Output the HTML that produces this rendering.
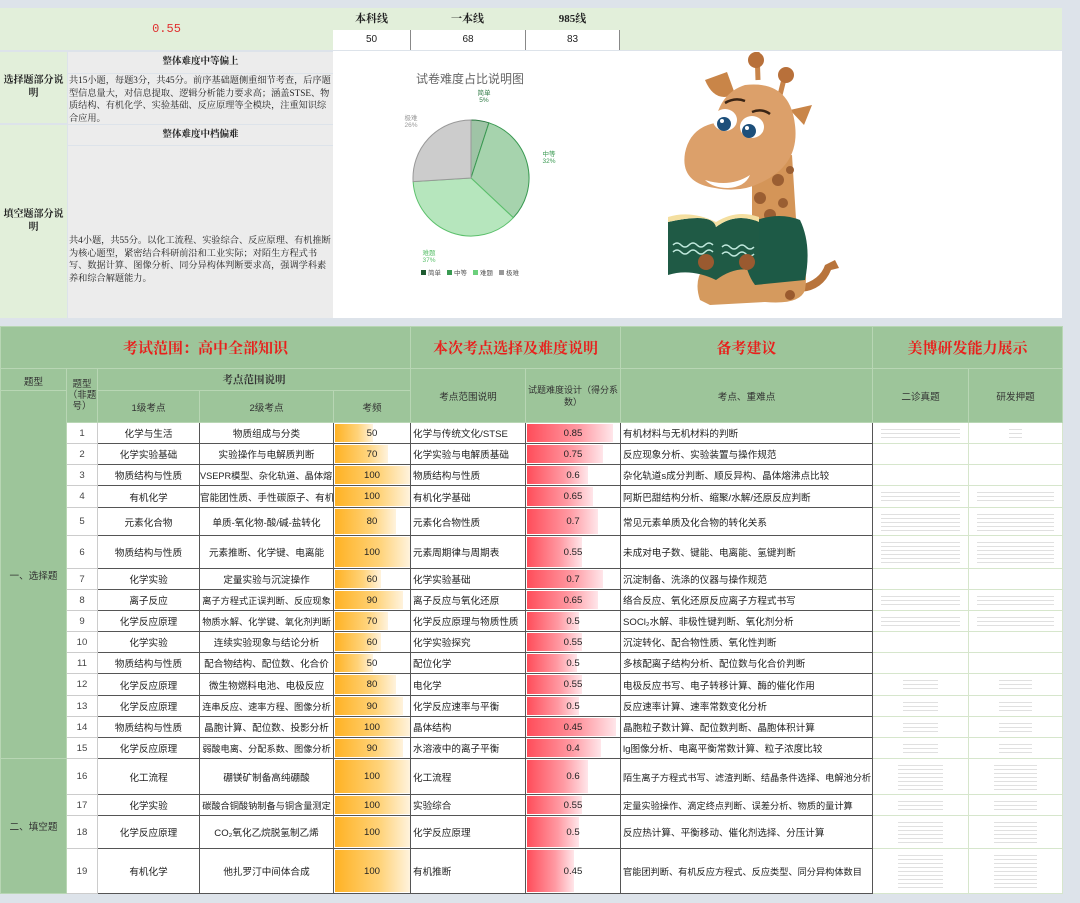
<!DOCTYPE html>
<html><head><meta charset="utf-8">
<style>
*{margin:0;padding:0;box-sizing:border-box}
body{width:1080px;height:903px;background:#dde3ea;position:relative;overflow:hidden;font-family:"Liberation Sans","Noto Sans CJK SC",sans-serif;color:#222}
.a{position:absolute}
.lg{background:#e2efda}
.ser{font-family:"Liberation Serif","Noto Serif CJK SC",serif}
table{position:absolute;left:0;top:326px;border-collapse:collapse;table-layout:fixed;width:1062px;font-size:9.6px}
td{overflow:hidden;white-space:nowrap;text-align:center;vertical-align:middle;position:relative;padding:0}
.h td,.hg{background:#9dc59a;border:1px solid #b8d6b4;color:#333}
.h1 td{font-family:"Liberation Serif","Noto Serif CJK SC",serif;font-weight:bold;color:#e8201c;font-size:15px}
.d td{background:#fff;border:1px solid #555}
.d td.n{border:1px solid #ccc;color:#444}
.d td.im{border:1px solid #d6e6cc}
.d td.l{text-align:left;padding-left:2px}
.g{background:#9dc59a!important;border:1px solid #b8d6b4!important;color:#333}
.b{position:absolute;left:1px;top:1px;bottom:1px}
.o{background:linear-gradient(90deg,#ffb224,#ffd37a 60%,#fff3dd)}
.r{background:linear-gradient(90deg,#ff4d5a,#ff9aa3 60%,#ffe6ea)}
td span{position:relative}
.th{position:absolute;left:8px;right:8px;top:3px;bottom:3px;background:repeating-linear-gradient(180deg,#fff 0 3px,#d8d8d8 3px 4px);opacity:.8}
</style></head><body>
<div class="a lg" style="left:0;top:8px;width:1062px;height:42px"></div>
<div class="a" style="left:0;top:8px;width:333px;height:42px;line-height:42px;text-align:center;color:#e03030;font-family:'Liberation Mono',monospace;font-size:12px">0.55</div>
<div class="a" style="left:333px;top:30px;width:287px;height:20px;background:#fff"></div>
<div class="a ser" style="left:333px;top:8px;width:77px;height:22px;line-height:22px;text-align:center;font-weight:bold;font-size:11px">本科线</div>
<div class="a ser" style="left:410px;top:8px;width:115px;height:22px;line-height:22px;text-align:center;font-weight:bold;font-size:11px">一本线</div>
<div class="a ser" style="left:525px;top:8px;width:95px;height:22px;line-height:22px;text-align:center;font-weight:bold;font-size:11px">985线</div>
<div class="a" style="left:333px;top:30px;width:77px;height:20px;line-height:20px;text-align:center;font-size:10px">50</div>
<div class="a" style="left:410px;top:30px;width:115px;height:20px;line-height:20px;text-align:center;font-size:10px;border-left:1px solid #888">68</div>
<div class="a" style="left:525px;top:30px;width:95px;height:20px;line-height:20px;text-align:center;font-size:10px;border-left:1px solid #888;border-right:1px solid #888">83</div>
<div class="a" style="left:333px;top:51px;width:729px;height:267px;background:#fff"></div>
<div class="a lg" style="left:0;top:52px;width:67px;height:71px"></div>
<div class="a lg" style="left:0;top:125px;width:67px;height:193px"></div>
<div class="a ser" style="left:0;top:74px;width:67px;text-align:center;font-weight:bold;font-size:10px;line-height:13px">选择题部分说<br>明</div>
<div class="a ser" style="left:0;top:208px;width:67px;text-align:center;font-weight:bold;font-size:10px;line-height:13px">填空题部分说<br>明</div>
<div class="a ser" style="left:68px;top:52px;width:265px;height:21px;background:#ececec;text-align:center;line-height:21px;font-weight:bold;font-size:9.5px">整体难度中等偏上</div>
<div class="a ser" style="left:68px;top:74px;width:265px;height:50px;background:#ececec;font-size:9.2px;line-height:12.5px;padding:0 1px;color:#222">共15小题，每题3分，共45分。前序基础题侧重细节考查，后序题型信息量大，对信息提取、逻辑分析能力要求高；涵盖STSE、物质结构、有机化学、实验基础、反应原理等全模块，注重知识综合应用。</div>
<div class="a ser" style="left:68px;top:125px;width:265px;height:20px;background:#ececec;text-align:center;line-height:20px;font-weight:bold;font-size:9.5px">整体难度中档偏难</div>
<div class="a ser" style="left:68px;top:146px;width:265px;height:172px;background:#ececec;font-size:9.2px;line-height:12.5px;padding:88px 1px 0;color:#222">共4小题，共55分。以化工流程、实验综合、反应原理、有机推断为核心题型，紧密结合科研前沿和工业实际；对陌生方程式书写、数据计算、图像分析、同分异构体判断要求高，强调学科素养和综合解题能力。</div>
<svg class="a" style="left:333px;top:52px" width="287" height="266" viewBox="333 52 287 266">
<text x="470" y="83" text-anchor="middle" font-size="12" fill="#666" font-family="Liberation Sans,Noto Sans CJK SC,sans-serif">试卷难度占比说明图</text>
<path d="M471,178 L471,120 A58,58 0 0 1 488.9,122.8 Z" fill="#9fc4a6" stroke="#2e7a44" stroke-width="1"/>
<path d="M471,178 L488.9,122.8 A58,58 0 0 1 513.3,217.7 Z" fill="#a6d3ad" stroke="#3a9a52" stroke-width="1"/>
<path d="M471,178 L513.3,217.7 A58,58 0 0 1 413.1,181.6 Z" fill="#b6e6bd" stroke="#5cc06c" stroke-width="1"/>
<path d="M471,178 L413.1,181.6 A58,58 0 0 1 471,120 Z" fill="#cccccc" stroke="#999" stroke-width="1"/>
<g font-size="6.5" font-family="Liberation Sans,Noto Sans CJK SC,sans-serif">
<text x="484" y="95" text-anchor="middle" fill="#2e7a44">简单</text><text x="484" y="102" text-anchor="middle" fill="#2e7a44">5%</text>
<text x="549" y="156" text-anchor="middle" fill="#3a9a52">中等</text><text x="549" y="163" text-anchor="middle" fill="#3a9a52">32%</text>
<text x="429" y="255" text-anchor="middle" fill="#5cc06c">难题</text><text x="429" y="262" text-anchor="middle" fill="#5cc06c">37%</text>
<text x="411" y="120" text-anchor="middle" fill="#999">极难</text><text x="411" y="127" text-anchor="middle" fill="#999">26%</text>
<rect x="421" y="270" width="5" height="5" fill="#1e5a30"/><text x="428" y="275" fill="#555">简单</text>
<rect x="447" y="270" width="5" height="5" fill="#3a9a52"/><text x="454" y="275" fill="#555">中等</text>
<rect x="473" y="270" width="5" height="5" fill="#6cd07c"/><text x="480" y="275" fill="#555">难题</text>
<rect x="499" y="270" width="5" height="5" fill="#999"/><text x="506" y="275" fill="#555">极难</text>
</g></svg>
<svg class="a" style="left:620px;top:52px" width="442" height="266" viewBox="620 52 442 266">
<path d="M800,285 q20,-5 25,-20 l10,-5 l4,8 l-8,2 q-8,20 -30,22z" fill="#b8743c"/>
<path d="M700,300 q-10,-30 20,-45 l70,-5 q20,10 15,40 q-5,15 -40,12 l-55,3z" fill="#d59a5e"/>
<circle cx="790" cy="295" r="5" fill="#9a5a2e"/>
<path d="M752,160 l40,-5 l5,80 l-45,10z" fill="#d49558"/>
<circle cx="778" cy="180" r="6" fill="#9a5e32"/><circle cx="760" cy="198" r="6" fill="#9a5e32"/><circle cx="783" cy="203" r="5" fill="#9a5e32"/><circle cx="770" cy="215" r="6" fill="#9a5e32"/><circle cx="790" cy="170" r="4" fill="#9a5e32"/>
<path d="M745,225 q30,-15 55,-5 q12,25 5,60 l-50,5 q-15,-20 -10,-60z" fill="#1d5a46"/>
<line x1="757" y1="50" x2="758" y2="80" stroke="#c8844a" stroke-width="5"/><circle cx="756" cy="60" r="8" fill="#b8703a"/>
<line x1="785" y1="75" x2="780" y2="95" stroke="#c8844a" stroke-width="5"/><circle cx="786" cy="75" r="8" fill="#b8703a"/>
<path d="M705,80 l22,-8 l8,22 q-20,10 -30,-14z" fill="#c98548"/>
<path d="M790,110 l22,-5 l-8,20 z" fill="#c98548"/>
<path d="M745,85 q45,-5 50,40 q5,40 -35,58 q-20,10 -45,5 q-35,-5 -30,-35 q5,-25 30,-30 q5,-30 30,-38z" fill="#dca06a"/>
<path d="M705,180 q25,8 45,-5 q-5,12 -22,13 q-15,0 -23,-8z" fill="#fff"/>
<path d="M725,103 q10,-6 20,-2" stroke="#3a2414" stroke-width="2.5" fill="none"/><path d="M752,112 q10,-4 18,2" stroke="#3a2414" stroke-width="2.5" fill="none"/>
<ellipse cx="725" cy="120" rx="12" ry="11" fill="#fff"/><ellipse cx="752" cy="127" rx="12" ry="11" fill="#fff"/>
<circle cx="724" cy="124" r="7" fill="#1d4f7a"/><circle cx="749" cy="131" r="7" fill="#1d4f7a"/>
<circle cx="722" cy="121" r="2" fill="#fff"/><circle cx="747" cy="128" r="2" fill="#fff"/>
<path d="M668,222 q45,-10 48,5 q20,-15 43,-5 l0,50 q-22,-8 -43,8 q-25,-12 -48,-5z" fill="#1f5a45"/>
<path d="M668,222 q45,-10 48,5 q20,-15 43,-5 l0,-5 q-22,-8 -43,5 q-25,-12 -48,-5z" fill="#f4dfa0"/>
<path d="M673,245 q4,-4 8,0 t8,0 t8,0 t8,0 t8,0 M722,247 q4,-4 8,0 t8,0 t8,0 t8,0" stroke="#bfe8dc" stroke-width="1.5" fill="none"/>
<path d="M673,252 q4,-4 8,0 t8,0 t8,0 t8,0 t8,0 M722,254 q4,-4 8,0 t8,0 t8,0 t8,0" stroke="#bfe8dc" stroke-width="1.5" fill="none"/>
<circle cx="706" cy="262" r="8" fill="#9a5a30"/><circle cx="747" cy="262" r="8" fill="#9a5a30"/>
</svg>
<table>
<colgroup><col style="width:66px"><col style="width:31px"><col style="width:102px"><col style="width:134px"><col style="width:77px"><col style="width:115px"><col style="width:95px"><col style="width:252px"><col style="width:96px"><col style="width:94px"></colgroup>
<tr class="h h1" style="height:42px"><td colspan="5">考试范围：高中全部知识</td><td colspan="2">本次考点选择及难度说明</td><td>备考建议</td><td colspan="2">美博研发能力展示</td></tr>
<tr class="h" style="height:22px"><td style="vertical-align:top;padding-top:5px">题型</td><td rowspan="2" style="white-space:normal;line-height:11px;font-size:9.5px">题型（非题号）</td><td colspan="3" class="ser" style="font-weight:bold;font-size:10.5px">考点范围说明</td><td rowspan="2">考点范围说明</td><td rowspan="2" style="white-space:normal;line-height:12px;font-size:9px">试题难度设计（得分系数）</td><td rowspan="2">考点、重难点</td><td rowspan="2">二诊真题</td><td rowspan="2">研发押题</td></tr>
<tr class="h" style="height:32px"><td rowspan="16" class="g">一、选择题</td><td>1级考点</td><td>2级考点</td><td>考频</td></tr>
<tr class="d" style="height:21px"><td class="n">1</td><td>化学与生活</td><td>物质组成与分类</td><td><div class="b o" style="width:50%"></div><span>50</span></td><td class="l">化学与传统文化/STSE</td><td><div class="b r" style="width:92%"></div><span>0.85</span></td><td class="l">有机材料与无机材料的判断</td><td class="im"><div class="th"></div></td><td class="im"><div class="th" style="left:40px;right:40px"></div></td></tr>
<tr class="d" style="height:21px"><td class="n">2</td><td>化学实验基础</td><td>实验操作与电解质判断</td><td><div class="b o" style="width:70%"></div><span>70</span></td><td class="l">化学实验与电解质基础</td><td><div class="b r" style="width:81%"></div><span>0.75</span></td><td class="l">反应现象分析、实验装置与操作规范</td><td class="im"></td><td class="im"></td></tr>
<tr class="d" style="height:21px"><td class="n">3</td><td>物质结构与性质</td><td style="font-size:9.2px">VSEPR模型、杂化轨道、晶体熔点</td><td><div class="b o" style="width:99%"></div><span>100</span></td><td class="l">物质结构与性质</td><td><div class="b r" style="width:65%"></div><span>0.6</span></td><td class="l">杂化轨道s成分判断、顺反异构、晶体熔沸点比较</td><td class="im"></td><td class="im"></td></tr>
<tr class="d" style="height:22px"><td class="n">4</td><td>有机化学</td><td style="text-align:right">官能团性质、手性碳原子、有机反应类</td><td><div class="b o" style="width:99%"></div><span>100</span></td><td class="l">有机化学基础</td><td><div class="b r" style="width:70%"></div><span>0.65</span></td><td class="l">阿斯巴甜结构分析、缩聚/水解/还原反应判断</td><td class="im"><div class="th"></div></td><td class="im"><div class="th"></div></td></tr>
<tr class="d" style="height:28px"><td class="n">5</td><td>元素化合物</td><td>单质-氧化物-酸/碱-盐转化</td><td><div class="b o" style="width:80%"></div><span>80</span></td><td class="l">元素化合物性质</td><td><div class="b r" style="width:76%"></div><span>0.7</span></td><td class="l">常见元素单质及化合物的转化关系</td><td class="im"><div class="th"></div></td><td class="im"><div class="th"></div></td></tr>
<tr class="d" style="height:33px"><td class="n">6</td><td>物质结构与性质</td><td>元素推断、化学键、电离能</td><td><div class="b o" style="width:99%"></div><span>100</span></td><td class="l">元素周期律与周期表</td><td><div class="b r" style="width:59%"></div><span>0.55</span></td><td class="l">未成对电子数、键能、电离能、氢键判断</td><td class="im"><div class="th"></div></td><td class="im"><div class="th"></div></td></tr>
<tr class="d" style="height:21px"><td class="n">7</td><td>化学实验</td><td>定量实验与沉淀操作</td><td><div class="b o" style="width:60%"></div><span>60</span></td><td class="l">化学实验基础</td><td><div class="b r" style="width:81%"></div><span>0.7</span></td><td class="l">沉淀制备、洗涤的仪器与操作规范</td><td class="im"></td><td class="im"></td></tr>
<tr class="d" style="height:21px"><td class="n">8</td><td>离子反应</td><td style="font-size:9.2px">离子方程式正误判断、反应现象</td><td><div class="b o" style="width:90%"></div><span>90</span></td><td class="l">离子反应与氧化还原</td><td><div class="b r" style="width:76%"></div><span>0.65</span></td><td class="l">络合反应、氧化还原反应离子方程式书写</td><td class="im"><div class="th"></div></td><td class="im"><div class="th"></div></td></tr>
<tr class="d" style="height:21px"><td class="n">9</td><td>化学反应原理</td><td style="font-size:9.2px">物质水解、化学键、氧化剂判断</td><td><div class="b o" style="width:70%"></div><span>70</span></td><td class="l">化学反应原理与物质性质</td><td><div class="b r" style="width:55%"></div><span>0.5</span></td><td class="l">SOCl₂水解、非极性键判断、氧化剂分析</td><td class="im"><div class="th"></div></td><td class="im"><div class="th"></div></td></tr>
<tr class="d" style="height:21px"><td class="n">10</td><td>化学实验</td><td>连续实验现象与结论分析</td><td><div class="b o" style="width:60%"></div><span>60</span></td><td class="l">化学实验探究</td><td><div class="b r" style="width:59%"></div><span>0.55</span></td><td class="l">沉淀转化、配合物性质、氧化性判断</td><td class="im"></td><td class="im"></td></tr>
<tr class="d" style="height:21px"><td class="n">11</td><td>物质结构与性质</td><td>配合物结构、配位数、化合价</td><td><div class="b o" style="width:50%"></div><span>50</span></td><td class="l">配位化学</td><td><div class="b r" style="width:53%"></div><span>0.5</span></td><td class="l">多核配离子结构分析、配位数与化合价判断</td><td class="im"></td><td class="im"></td></tr>
<tr class="d" style="height:22px"><td class="n">12</td><td>化学反应原理</td><td>微生物燃料电池、电极反应</td><td><div class="b o" style="width:80%"></div><span>80</span></td><td class="l">电化学</td><td><div class="b r" style="width:59%"></div><span>0.55</span></td><td class="l">电极反应书写、电子转移计算、酶的催化作用</td><td class="im"><div class="th" style="left:30px;right:30px"></div></td><td class="im"><div class="th" style="left:30px;right:30px"></div></td></tr>
<tr class="d" style="height:21px"><td class="n">13</td><td>化学反应原理</td><td style="font-size:9.2px">连串反应、速率方程、图像分析</td><td><div class="b o" style="width:90%"></div><span>90</span></td><td class="l">化学反应速率与平衡</td><td><div class="b r" style="width:55%"></div><span>0.5</span></td><td class="l">反应速率计算、速率常数变化分析</td><td class="im"><div class="th" style="left:30px;right:30px"></div></td><td class="im"><div class="th" style="left:30px;right:30px"></div></td></tr>
<tr class="d" style="height:21px"><td class="n">14</td><td>物质结构与性质</td><td>晶胞计算、配位数、投影分析</td><td><div class="b o" style="width:99%"></div><span>100</span></td><td class="l">晶体结构</td><td><div class="b r" style="width:95%"></div><span>0.45</span></td><td class="l">晶胞粒子数计算、配位数判断、晶胞体积计算</td><td class="im"><div class="th" style="left:30px;right:30px"></div></td><td class="im"><div class="th" style="left:30px;right:30px"></div></td></tr>
<tr class="d" style="height:21px"><td class="n">15</td><td>化学反应原理</td><td style="font-size:9.2px">弱酸电离、分配系数、图像分析</td><td><div class="b o" style="width:90%"></div><span>90</span></td><td class="l">水溶液中的离子平衡</td><td><div class="b r" style="width:79%"></div><span>0.4</span></td><td class="l">lg图像分析、电离平衡常数计算、粒子浓度比较</td><td class="im"><div class="th" style="left:30px;right:30px"></div></td><td class="im"><div class="th" style="left:30px;right:30px"></div></td></tr>
<tr class="d" style="height:36px"><td rowspan="4" class="g">二、填空题</td><td class="n">16</td><td>化工流程</td><td>硼镁矿制备高纯硼酸</td><td><div class="b o" style="width:99%"></div><span>100</span></td><td class="l">化工流程</td><td><div class="b r" style="width:65%"></div><span>0.6</span></td><td class="l" style="font-size:9.2px">陌生离子方程式书写、滤渣判断、结晶条件选择、电解池分析</td><td class="im"><div class="th" style="left:25px;right:25px"></div></td><td class="im"><div class="th" style="left:25px;right:25px"></div></td></tr>
<tr class="d" style="height:21px"><td class="n">17</td><td>化学实验</td><td style="font-size:9.2px">碳酸合铜酸钠制备与铜含量测定</td><td><div class="b o" style="width:99%"></div><span>100</span></td><td class="l">实验综合</td><td><div class="b r" style="width:59%"></div><span>0.55</span></td><td class="l" style="font-size:9.2px">定量实验操作、滴定终点判断、误差分析、物质的量计算</td><td class="im"><div class="th" style="left:25px;right:25px"></div></td><td class="im"><div class="th" style="left:25px;right:25px"></div></td></tr>
<tr class="d" style="height:33px"><td class="n">18</td><td>化学反应原理</td><td>CO₂氧化乙烷脱氢制乙烯</td><td><div class="b o" style="width:99%"></div><span>100</span></td><td class="l">化学反应原理</td><td><div class="b r" style="width:55%"></div><span>0.5</span></td><td class="l">反应热计算、平衡移动、催化剂选择、分压计算</td><td class="im"><div class="th" style="left:25px;right:25px"></div></td><td class="im"><div class="th" style="left:25px;right:25px"></div></td></tr>
<tr class="d" style="height:45px"><td class="n">19</td><td>有机化学</td><td>他扎罗汀中间体合成</td><td><div class="b o" style="width:99%"></div><span>100</span></td><td class="l">有机推断</td><td><div class="b r" style="width:50%"></div><span>0.45</span></td><td class="l" style="font-size:9.2px">官能团判断、有机反应方程式、反应类型、同分异构体数目</td><td class="im"><div class="th" style="left:25px;right:25px"></div></td><td class="im"><div class="th" style="left:25px;right:25px"></div></td></tr>
</table>
</body></html>
